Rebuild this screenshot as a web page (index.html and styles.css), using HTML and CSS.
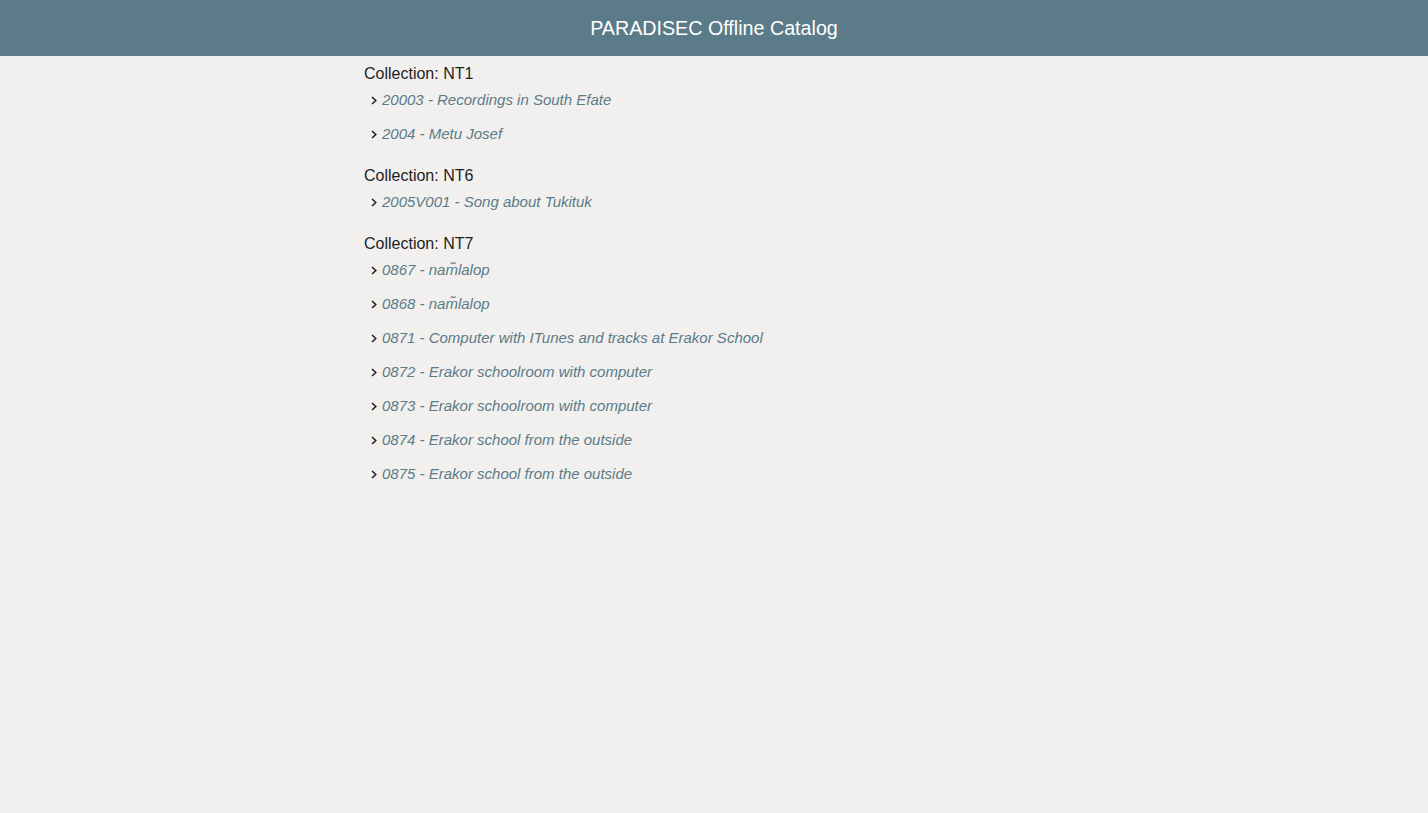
FILE: index.html
```html
<!DOCTYPE html>
<html>
<head>
<meta charset="utf-8">
<title>PARADISEC Offline Catalog</title>
<link rel="stylesheet" href="styles.css">
</head>
<body>
<header class="topbar">PARADISEC Offline Catalog</header>
<main class="catalog">
  <section class="collection">
    <h2 class="collection-title">Collection: NT1</h2>
    <ul class="items">
      <li class="item"><svg class="chev" viewBox="0 0 6 9" width="6" height="9"><polyline points="1,1 4.8,4.5 1,8"/></svg><a href="#">20003 - Recordings in South Efate</a></li>
      <li class="item"><svg class="chev" viewBox="0 0 6 9" width="6" height="9"><polyline points="1,1 4.8,4.5 1,8"/></svg><a href="#">2004 - Metu Josef</a></li>
    </ul>
  </section>
  <section class="collection">
    <h2 class="collection-title">Collection: NT6</h2>
    <ul class="items">
      <li class="item"><svg class="chev" viewBox="0 0 6 9" width="6" height="9"><polyline points="1,1 4.8,4.5 1,8"/></svg><a href="#">2005V001 - Song about Tukituk</a></li>
    </ul>
  </section>
  <section class="collection">
    <h2 class="collection-title">Collection: NT7</h2>
    <ul class="items">
      <li class="item"><svg class="chev" viewBox="0 0 6 9" width="6" height="9"><polyline points="1,1 4.8,4.5 1,8"/></svg><a href="#">0867 - nam̃lalop</a></li>
      <li class="item"><svg class="chev" viewBox="0 0 6 9" width="6" height="9"><polyline points="1,1 4.8,4.5 1,8"/></svg><a href="#">0868 - nam̃lalop</a></li>
      <li class="item"><svg class="chev" viewBox="0 0 6 9" width="6" height="9"><polyline points="1,1 4.8,4.5 1,8"/></svg><a href="#">0871 - Computer with ITunes and tracks at Erakor School</a></li>
      <li class="item"><svg class="chev" viewBox="0 0 6 9" width="6" height="9"><polyline points="1,1 4.8,4.5 1,8"/></svg><a href="#">0872 - Erakor schoolroom with computer</a></li>
      <li class="item"><svg class="chev" viewBox="0 0 6 9" width="6" height="9"><polyline points="1,1 4.8,4.5 1,8"/></svg><a href="#">0873 - Erakor schoolroom with computer</a></li>
      <li class="item"><svg class="chev" viewBox="0 0 6 9" width="6" height="9"><polyline points="1,1 4.8,4.5 1,8"/></svg><a href="#">0874 - Erakor school from the outside</a></li>
      <li class="item"><svg class="chev" viewBox="0 0 6 9" width="6" height="9"><polyline points="1,1 4.8,4.5 1,8"/></svg><a href="#">0875 - Erakor school from the outside</a></li>
    </ul>
  </section>
</main>
</body>
</html>
```
FILE: styles.css
```css
html, body {
  margin: 0;
  padding: 0;
}
body {
  background: #f1f0ee;
  font-family: "Liberation Sans", Arial, sans-serif;
  color: #1e1e1e;
  min-height: 813px;
}
.topbar {
  height: 56px;
  background: #5b7b88;
  color: #ffffff;
  font-size: 19.7px;
  display: flex;
  align-items: center;
  justify-content: center;
}
.catalog {
  width: 700px;
  margin: 0 auto;
  padding-top: 6px;
  display: flex;
  flex-direction: column;
  gap: 10px;
}
.collection-title {
  margin: 0;
  font-size: 16px;
  font-weight: normal;
  line-height: 24px;
  color: #1e1e1e;
}
.items {
  list-style: none;
  margin: 0;
  padding: 0;
}
.item {
  display: flex;
  align-items: center;
  height: 34px;
  padding: 4px 0 10px 7px;
  box-sizing: border-box;
  line-height: 20px;
}
.chev {
  flex: none;
  margin-right: 5px;
  fill: none;
  stroke: #1e1e1e;
  stroke-width: 1.5;
}
.item a {
  font-size: 15px;
  font-style: italic;
  color: #5b7b88;
  text-decoration: none;
}
```
